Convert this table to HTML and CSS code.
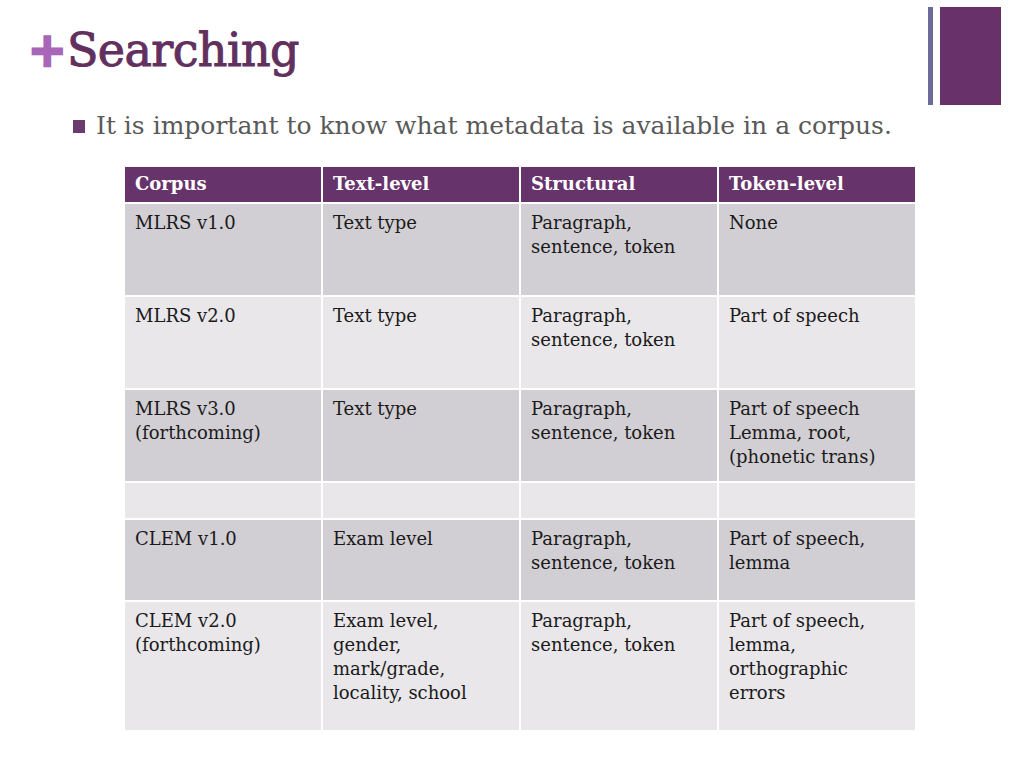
FILE: index.html
```html
<!DOCTYPE html>
<html lang="en">
<head>
<meta charset="utf-8">
<title>Searching</title>
<link rel="stylesheet" href="styles.css">
</head>
<body>
<div class="slide">
  <header class="top">
    <h1 class="title"><span class="plus">+</span>Searching</h1>
    <div class="deco">
      <div class="deco-bar"></div>
      <div class="deco-block"></div>
    </div>
  </header>
  <ul class="bullets">
    <li><span class="square"></span>It is important to know what metadata is available in a corpus.</li>
  </ul>
  <div class="grid">
    <div class="cell head">Corpus</div>
    <div class="cell head">Text-level</div>
    <div class="cell head">Structural</div>
    <div class="cell head">Token-level</div>

    <div class="cell dark">MLRS v1.0</div>
    <div class="cell dark">Text type</div>
    <div class="cell dark">Paragraph,<br>sentence, token</div>
    <div class="cell dark">None</div>

    <div class="cell light">MLRS v2.0</div>
    <div class="cell light">Text type</div>
    <div class="cell light">Paragraph,<br>sentence, token</div>
    <div class="cell light">Part of speech</div>

    <div class="cell dark">MLRS v3.0<br>(forthcoming)</div>
    <div class="cell dark">Text type</div>
    <div class="cell dark">Paragraph,<br>sentence, token</div>
    <div class="cell dark">Part of speech<br>Lemma, root,<br>(phonetic trans)</div>

    <div class="cell light"></div>
    <div class="cell light"></div>
    <div class="cell light"></div>
    <div class="cell light"></div>

    <div class="cell dark">CLEM v1.0</div>
    <div class="cell dark">Exam level</div>
    <div class="cell dark">Paragraph,<br>sentence, token</div>
    <div class="cell dark">Part of speech,<br>lemma</div>

    <div class="cell light">CLEM v2.0<br>(forthcoming)</div>
    <div class="cell light">Exam level,<br>gender,<br>mark/grade,<br>locality, school</div>
    <div class="cell light">Paragraph,<br>sentence, token</div>
    <div class="cell light">Part of speech,<br>lemma,<br>orthographic<br>errors</div>
  </div>
</div>
</body>
</html>
```

FILE: styles.css
```css
* { box-sizing: border-box; }
html, body { margin: 0; padding: 0; background: #ffffff; }
body { font-family: "DejaVu Serif", "Liberation Serif", serif; }

.slide {
  width: 1024px;
  height: 768px;
  overflow: hidden;
}

.top {
  display: flex;
  justify-content: space-between;
  align-items: flex-start;
  padding: 7px 23px 0 28px;
  height: 106px;
}

.title {
  margin: 16px 0 0 0;
  font-size: 46px;
  font-weight: normal;
  line-height: 54px;
  color: #62305f;
  letter-spacing: -0.6px;
  -webkit-text-stroke: 1px #62305f;
}
.plus {
  color: #a866b8;
  -webkit-text-stroke: 2.5px #a866b8;
  font-weight: bold;
  margin-right: 1px;
}

.deco { display: flex; gap: 7px; height: 98px; }
.deco-bar { width: 5px; background: #6c6a98; }
.deco-block { width: 61px; background: #68316a; }

.bullets {
  list-style: none;
  margin: 0;
  padding: 0 0 0 73px;
  height: 61px;
}
.bullets li {
  display: flex;
  align-items: center;
  font-size: 25px;
  line-height: 30px;
  color: #595959;
  padding-top: 5px;
}
.square {
  width: 12px;
  height: 13px;
  background: #6b3a6f;
  margin-right: 11px;
  flex: none;
}

.grid {
  margin-left: 125px;
  width: 790px;
  display: grid;
  grid-template-columns: repeat(4, 1fr);
  grid-template-rows: 35px 91px 91px 91px 35px 80px 128px;
  gap: 2px;
}
.cell {
  font-size: 18px;
  line-height: 24px;
  color: #1a1a1a;
  padding: 7px 10px 5px 10px;
}
.head {
  background: #66336a;
  color: #ffffff;
  font-weight: bold;
  font-size: 18px;
  padding: 5px 10px;
}
.dark { background: #d2cfd4; }
.light { background: #e9e7ea; }
```
